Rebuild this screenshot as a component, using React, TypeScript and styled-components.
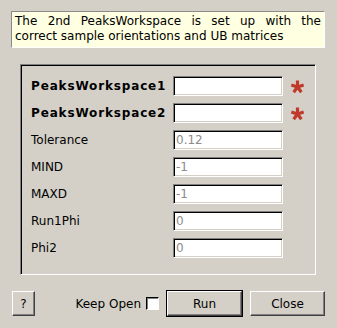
import React from "react";
import styled, { createGlobalStyle } from "styled-components";

const Global = createGlobalStyle`
  html, body { margin: 0; padding: 0; background: #d4d0c8; }
  body { font-family: "DejaVu Sans", Verdana, sans-serif; font-size: 12px; color: #000; }
`;

const Window = styled.div`
  width: 337px;
  height: 328px;
  box-sizing: border-box;
  padding: 11px 12px 0 11px;
  display: flex;
  flex-direction: column;
  background: #d4d0c8;
`;

const Tip = styled.div`
  box-sizing: border-box;
  width: 314px;
  padding: 2px 3px 3px 3px;
  background: #ffffe1;
  border: 1px solid;
  border-color: #8a8a8a #ffffff #ffffff #8a8a8a;
  line-height: 15px;
  text-align: justify;
  text-align-last: left;
`;

const Frame = styled.div`
  box-sizing: border-box;
  margin: 16px 9px 0 9px;
  height: 211px;
  border: 1px solid;
  border-color: #808080 #ffffff #ffffff #808080;
  box-shadow: inset 1px 1px 0 #000000;
  padding: 11px 0 0 10px;
`;

const Grid = styled.div`
  display: grid;
  grid-template-columns: 142px 110px 22px;
  grid-auto-rows: 20px;
  row-gap: 7px;
  align-items: center;
`;

const Label = styled.div<{ $bold?: boolean }>`
  font-weight: ${(p) => (p.$bold ? "bold" : "normal")};
  letter-spacing: ${(p) => (p.$bold ? "0.85px" : "0")};
  white-space: nowrap;
`;

const Field = styled.input`
  box-sizing: border-box;
  width: 110px;
  height: 20px;
  margin: 0;
  padding: 0 2px;
  background: #fff;
  border: 1px solid;
  border-color: #808080 #ffffff #ffffff #808080;
  box-shadow: inset 1px 1px 0 #000000, inset -1px -1px 0 #d4d0c8;
  font-family: "DejaVu Sans", sans-serif;
  font-size: 12px;
  outline: none;
  &::placeholder { color: #8c8c8c; opacity: 1; }
`;

const Req = styled.div`
  display: flex;
  justify-content: flex-start;
  padding-left: 7px;
`;

const Footer = styled.div`
  margin-top: 15px;
  display: flex;
  align-items: center;
  height: 27px;
`;

const Btn = styled.button<{ $w: number }>`
  box-sizing: border-box;
  width: ${(p) => p.$w}px;
  height: 25px;
  margin: 0;
  padding: 0;
  background: #d4d0c8;
  border: 1px solid;
  border-color: #ffffff #404040 #404040 #ffffff;
  box-shadow: inset -1px -1px 0 #808080;
  font-family: "DejaVu Sans", sans-serif;
  font-size: 12px;
  color: #000;
`;

const HelpBtn = styled(Btn)`
  margin-left: 1px;
`;

const DefaultRing = styled.div`
  border: 1px solid #000;
  display: flex;
  margin-left: 7px;
`;

const CloseBtn = styled(Btn)`
  margin-left: 7px;
`;

const Spacer = styled.div`
  flex: 1;
`;

const KeepLabel = styled.span`
  margin-right: 5px;
`;

const Check = styled.div`
  box-sizing: border-box;
  width: 13px;
  height: 13px;
  background: #fff;
  border: 1px solid;
  border-color: #000 #ffffff #ffffff #000;
  box-shadow: inset 1px 1px 0 #808080;
`;

const Star = () => (
  <svg width="15" height="15" viewBox="0 0 15 15">
    {[90, 162, 234, 306, 18].map((a) => {
      const r = (a * Math.PI) / 180;
      const cx = 7.5;
      const cy = 8;
      return (
        <line
          key={a}
          x1={cx}
          y1={cy}
          x2={cx + Math.cos(r) * 6.5}
          y2={cy - Math.sin(r) * 6.5}
          stroke="#c03a2b"
          strokeWidth="3.2"
          strokeLinecap="butt"
        />
      );
    })}
  </svg>
);

const rows: { label: string; bold?: boolean; value?: string }[] = [
  { label: "PeaksWorkspace1", bold: true },
  { label: "PeaksWorkspace2", bold: true },
  { label: "Tolerance", value: "0.12" },
  { label: "MIND", value: "-1" },
  { label: "MAXD", value: "-1" },
  { label: "Run1Phi", value: "0" },
  { label: "Phi2", value: "0" },
];

export default function App() {
  return (
    <>
      <Global />
      <Window>
        <Tip>
          The 2nd PeaksWorkspace is set up with the correct sample orientations and UB matrices
        </Tip>
        <Frame>
          <Grid>
            {rows.map((r) => (
              <React.Fragment key={r.label}>
                <Label $bold={r.bold}>{r.label}</Label>
                <Field placeholder={r.value ?? ""} />
                <Req>{r.bold ? <Star /> : null}</Req>
              </React.Fragment>
            ))}
          </Grid>
        </Frame>
        <Footer>
          <HelpBtn $w={23}>?</HelpBtn>
          <Spacer />
          <KeepLabel>Keep Open</KeepLabel>
          <Check />
          <DefaultRing>
            <Btn $w={75}>Run</Btn>
          </DefaultRing>
          <CloseBtn $w={75}>Close</CloseBtn>
        </Footer>
      </Window>
    </>
  );
}
